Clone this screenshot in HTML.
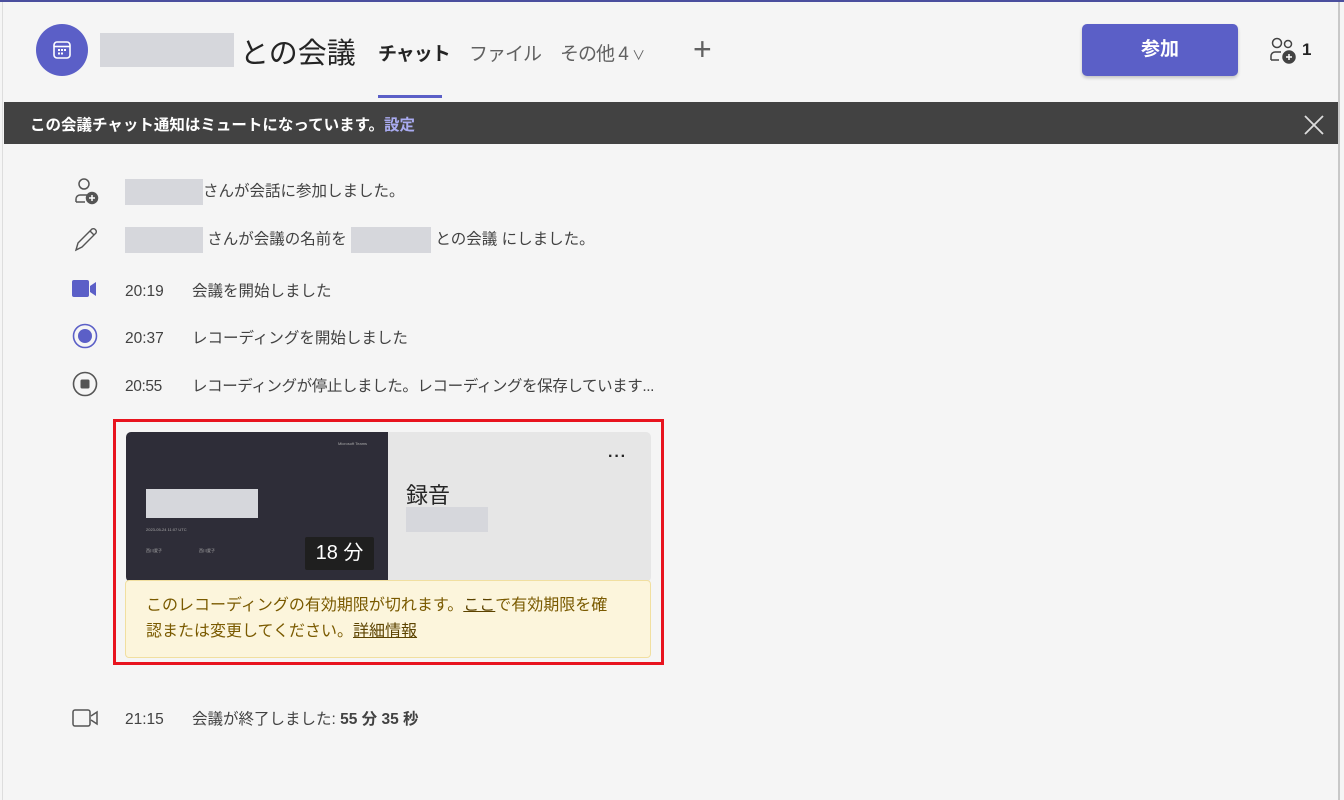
<!DOCTYPE html>
<html><head><meta charset="utf-8"><style>
*{margin:0;padding:0;box-sizing:border-box}
body{width:1344px;height:800px;background:#f5f5f5;font-family:"Liberation Sans","Noto Sans CJK JP",sans-serif;position:relative;overflow:hidden;color:#424242}
.a{position:absolute}
.row{position:absolute;left:125px;font-size:15.5px;color:#424242;white-space:nowrap}
.t{display:inline-block;width:67px}
.ph{display:inline-block;background:#d6d7dc;vertical-align:middle}
</style></head><body>
<div class="a" style="left:0;top:0;width:1344px;height:2px;background:#4b4f9e"></div>
<div class="a" style="left:2px;top:2px;width:1px;height:798px;background:#ddd"></div>
<div class="a" style="left:1338px;top:2px;width:2px;height:798px;background:#c8c8c8"></div>
<div class="a" style="left:36px;top:24px;width:52px;height:52px;border-radius:50%;background:#5b5fc7"></div>
<svg class="a" style="left:50px;top:38px" width="24" height="24" viewBox="0 0 24 24" fill="none" stroke="#fff" stroke-width="1.6"><rect x="4" y="4" width="16" height="16" rx="3"/><line x1="4" y1="8.5" x2="20" y2="8.5"/><g fill="#fff" stroke="none"><rect x="8" y="11" width="2" height="2"/><rect x="11" y="11" width="2" height="2"/><rect x="14" y="11" width="2" height="2"/><rect x="8" y="14.5" width="2" height="2"/><rect x="11" y="14.5" width="2" height="2"/></g></svg>
<div class="a ph" style="left:100px;top:33px;width:134px;height:34px"></div>
<div class="a" style="left:240px;top:30px;font-size:29px;color:#242424">との会議</div>
<div class="a" style="left:378px;top:39px;font-size:19px;color:#242424;font-weight:bold;letter-spacing:-1px">チャット</div>
<div class="a" style="left:469px;top:39px;font-size:19px;color:#616161;letter-spacing:-1px">ファイル</div>
<div class="a" style="left:560px;top:39px;font-size:19px;color:#616161;letter-spacing:-1px">その他 4 <span style="font-size:13px">∨</span></div>
<div class="a" style="left:693px;top:31px;font-size:32px;color:#616161;font-weight:300">+</div>
<div class="a" style="left:378px;top:95px;width:64px;height:3px;background:#5b5fc7"></div>
<div class="a" style="left:1082px;top:24px;width:156px;height:52px;background:#5b5fc7;border-radius:5px;box-shadow:0 2px 3px rgba(0,0,0,.2);color:#fff;font-size:19px;font-weight:bold;text-align:center;line-height:52px">参加</div>
<svg class="a" style="left:1268px;top:36px" width="32" height="30" viewBox="0 0 32 30" fill="none" stroke="#424242" stroke-width="1.5"><circle cx="9" cy="7" r="4.5"/><circle cx="20" cy="8" r="3.5"/><path d="M3 24v-4a4 4 0 0 1 4-4h6"/><path d="M3 24h8"/><circle cx="21" cy="21" r="6" fill="#424242"/><path d="M21 18v6M18 21h6" stroke="#fff"/></svg>
<div class="a" style="left:1302px;top:40px;font-size:17px;font-weight:bold;color:#242424">1</div>
<div class="a" style="left:4px;top:102px;width:1334px;height:42px;background:#424242"></div>
<div class="a" style="left:30px;top:113px;font-size:15.5px;color:#fff;font-weight:bold">この会議チャット通知はミュートになっています。<span style="color:#a9abf0">設定</span></div>
<svg class="a" style="left:1303px;top:114px" width="22" height="22" stroke="#ddd" stroke-width="1.8"><path d="M2 2L20 20M20 2L2 20"/></svg>

<svg class="a" style="left:72px;top:176px" width="30" height="30" viewBox="0 0 30 30" fill="none" stroke="#555" stroke-width="1.5"><circle cx="12" cy="8" r="5"/><path d="M4 26v-3a4 4 0 0 1 4-4h7"/><path d="M4 26h9"/><circle cx="20" cy="22" r="5.5" fill="#555"/><path d="M20 19v6M17 22h6" stroke="#fff"/></svg>
<div class="row" style="top:179px"><span class="ph" style="width:78px;height:26px"></span>さんが会話に参加しました。</div>
<svg class="a" style="left:72px;top:226px" width="30" height="28" viewBox="0 0 30 28" fill="none" stroke="#555" stroke-width="1.4"><path d="M4 24l2-7L20 3a3 3 0 0 1 4 4L10 21z"/><path d="M18 5l4 4"/></svg>
<div class="row" style="top:227px"><span class="ph" style="width:78px;height:26px"></span> さんが会議の名前を <span class="ph" style="width:80px;height:26px"></span> との会議 にしました。</div>
<svg class="a" style="left:70px;top:278px" width="30" height="22"><rect x="2" y="2" width="17" height="17" rx="2" fill="#5b5fc7"/><path d="M20 8l6-4v14l-6-4z" fill="#5b5fc7"/></svg>
<div class="row" style="top:279px"><span class="t">20:19</span>会議を開始しました</div>
<svg class="a" style="left:71px;top:322px" width="28" height="28"><circle cx="14" cy="14" r="11.5" fill="none" stroke="#5b5fc7" stroke-width="1.6"/><circle cx="14" cy="14" r="7" fill="#5b5fc7"/></svg>
<div class="row" style="top:326px"><span class="t">20:37</span>レコーディングを開始しました</div>
<svg class="a" style="left:71px;top:370px" width="28" height="28"><circle cx="14" cy="14" r="11.5" fill="none" stroke="#555" stroke-width="1.6"/><rect x="9.5" y="9.5" width="9" height="9" rx="1.5" fill="#555"/></svg>
<div class="row" style="top:374px;letter-spacing:-0.4px"><span class="t">20:55</span>レコーディングが停止しました。レコーディングを保存しています...</div>

<div class="a" style="left:113px;top:419px;width:551px;height:246px;border:3px solid #e8141e"></div>
<div class="a" style="left:126px;top:432px;width:525px;height:150px;background:#e6e6e6;border-radius:5px;overflow:hidden">
 <div class="a" style="left:0;top:0;width:262px;height:150px;background:#2e2d38">
  <div class="a" style="left:212px;top:9px;font-size:4px;color:#aaa">Microsoft Teams</div>
  <div class="a" style="left:20px;top:57px;width:112px;height:29px;background:#d6d7dc"></div>
  <div class="a" style="left:20px;top:95px;font-size:4px;color:#aaa">2023-05-24 11:07 UTC</div>
  <div class="a" style="left:20px;top:116px;font-size:4px;color:#aaa">西川愛子</div>
  <div class="a" style="left:73px;top:116px;font-size:4px;color:#aaa">西川愛子</div>
  <div class="a" style="left:179px;top:105px;width:69px;height:33px;background:#1f1f1f;border-radius:2px;color:#fff;font-size:20px;text-align:center;line-height:33px">18 分</div>
 </div>
 <div class="a" style="left:482px;top:16px;font-size:16px;color:#242424;font-weight:bold;letter-spacing:1px">···</div>
 <div class="a" style="left:280px;top:46px;font-size:22px;color:#242424">録音</div>
 <div class="a" style="left:280px;top:75px;width:82px;height:25px;background:#d6d7dc"></div>
</div>
<div class="a" style="left:125px;top:580px;width:526px;height:78px;background:#fcf5dc;border:1px solid #f1dfa0;border-radius:4px;padding:12px 28px 12px 20px;font-size:16px;line-height:26px;color:#7a5a00">このレコーディングの有効期限が切れます。<u style="color:#5c4300">ここ</u>で有効期限を確認または変更してください。<u style="color:#5c4300">詳細情報</u></div>

<svg class="a" style="left:71px;top:706px" width="30" height="24" fill="none" stroke="#555" stroke-width="1.5"><rect x="2" y="4" width="17" height="16" rx="2"/><path d="M20 10l6-4v12l-6-4"/></svg>
<div class="row" style="top:707px"><span class="t">21:15</span>会議が終了しました: <b>55 分 35 秒</b></div>
</body></html>
